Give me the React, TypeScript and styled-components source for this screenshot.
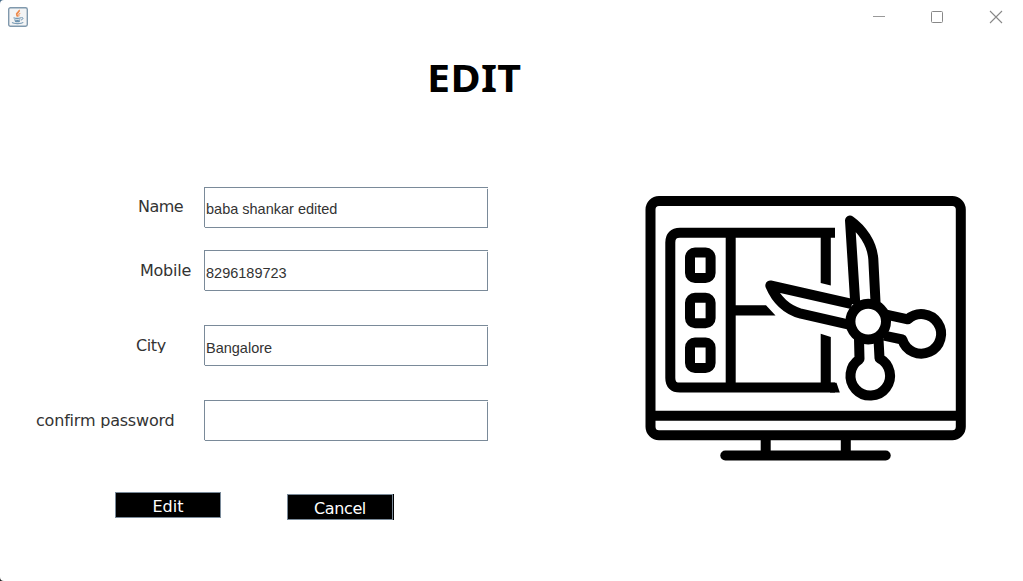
import React from "react";
import styled, { createGlobalStyle } from "styled-components";

const GlobalStyle = createGlobalStyle`
  * { box-sizing: border-box; }
  body { margin: 0; background: linear-gradient(#476b88, #222); }
`;

const Window = styled.div`
  width: 1023px;
  height: 581px;
  display: flex;
  flex-direction: column;
  background: #fff;
  border-radius: 4px 0 0 4px;
  overflow: hidden;
`;

const TitleBar = styled.header`
  height: 34px;
  flex: none;
  display: flex;
  justify-content: space-between;
  align-items: flex-start;
  padding: 7px 20px 0 8px;
`;

const WindowControls = styled.div`
  display: flex;
  gap: 44px;
  padding-top: 3px;
  svg { display: block; }
`;

const Heading = styled.h1`
  margin: 18px 0 0 427px;
  height: 50px;
  width: 120px;
  flex: none;
  font: 700 38px/50px "Noto Sans", sans-serif;
  letter-spacing: 0.3px;
  color: #000;
  transform: scaleX(1.085);
  transform-origin: 0 50%;
`;

const Content = styled.main`
  display: flex;
  align-items: flex-start;
  padding-top: 85px;
`;

const Form = styled.form`
  width: 640px;
  display: flex;
  flex-direction: column;
`;

const FieldRow = styled.div<{ $gap: number }>`
  display: flex;
  height: 41px;
  margin-bottom: ${(p) => p.$gap}px;
`;

const LabelCell = styled.div<{ $indent: number; $top: number }>`
  width: 204px;
  flex: none;
  padding: ${(p) => p.$top}px 0 0 ${(p) => p.$indent}px;
`;

const Label = styled.label<{ $spacing: number; $clip: boolean }>`
  display: block;
  height: ${(p) => (p.$clip ? 18 : 22)}px;
  overflow: ${(p) => (p.$clip ? "hidden" : "visible")};
  white-space: nowrap;
  font: 16px/22px "DejaVu Sans", sans-serif;
  letter-spacing: ${(p) => p.$spacing}px;
  color: #333;
`;

const TextField = styled.div<{ $shift: number }>`
  position: relative;
  width: 284px;
  height: 41px;
  border: 1px solid #7a8a99;
  padding: ${(p) => 2 + p.$shift}px 0 0 1px;
  font: 14.5px/38px "Liberation Sans", Arial, sans-serif;
  line-height: ${(p) => 38 - p.$shift}px;
  padding-top: ${(p) => 2 + p.$shift * 1.5}px;
  color: #333;
  white-space: nowrap;

  &::before, &::after {
    content: "";
    position: absolute;
    width: 1px;
    height: 1px;
    background: #eee;
  }
  &::before { right: -1px; top: 0; }
  &::after { left: -1px; bottom: -1px; }
`;

const Actions = styled.div`
  display: flex;
  align-items: flex-start;
  padding: 51px 0 0 115px;
  gap: 66px;
`;

const Button = styled.button<{ $drop?: number; $spacing?: number }>`
  width: 106px;
  height: 26px;
  margin: ${(p) => p.$drop ?? 0}px 0 0;
  padding: 3px 0 0;
  border: 1px solid #7a8a99;
  border-radius: 0;
  background: #000;
  color: #fff;
  font: 16px/21px "DejaVu Sans", sans-serif;
  letter-spacing: ${(p) => p.$spacing ?? 0}px;
  box-shadow: ${(p) => (p.$drop ? "1px 0 0 #000" : "none")};
`;

const Illustration = styled.svg`
  display: block;
  flex: none;
  margin-top: 3px;
`;

const fields = [
  { label: "Name", value: "baba shankar edited", indent: 138, top: 9, gap: 22, spacing: -0.5, clip: false, shift: 0 },
  { label: "Mobile", value: "8296189723", indent: 140, top: 10, gap: 34, spacing: -0.25, clip: false, shift: 1 },
  { label: "City", value: "Bangalore", indent: 136, top: 10, gap: 34, spacing: -0.4, clip: true, shift: 1 },
  { label: "confirm password", value: "", indent: 36, top: 10, gap: 0, spacing: -0.2, clip: true, shift: 0 },
];

function JavaIcon() {
  return (
    <svg width="20" height="20" viewBox="0 0 20 20" fill="none">
      <rect x="0.7" y="0.7" width="18.6" height="18.6" rx="1.8" fill="#f3f4f5" stroke="#8099ad" strokeWidth="1.4" />
      <path d="M11 3c1.300 2-3.400 2.900-2.200 4.900.3.700.8 1.200.8 1.900" stroke="#ee8a4c" strokeWidth="1.800" />
      <path d="M12.300 6.200c-1.700.7-2 1.500-1.100 3.200" stroke="#f0a070" strokeWidth="1.200" />
      <path d="M5.500 10.700c2 .7 5.500.6 7.500 0M6.200 12.700c2 .8 4.400.8 6.100 0M7 14.200c1.500.6 3.400.6 4.800 0" stroke="#6d93b0" strokeWidth="1.200" />
      <path d="M13.300 10.600c2.600-.5 2 2-.3 2.400" stroke="#6d93b0" />
      <path d="M4 15.500c2 1.500 9.500 1.300 11.300-.1" stroke="#7c9db6" strokeWidth="1.200" />
    </svg>
  );
}

function EditorArt() {
  return (
    <Illustration width="330" height="275" viewBox="640 190 330 275" fill="none" stroke="#000" strokeWidth="10">
      <rect x="650.5" y="201" width="310.300" height="234.200" rx="8.500" />
      <path d="M650 415.700H961M765.700 435V455M845.800 435V455" />
      <path d="M725.300 455.500H885.700" strokeLinecap="round" />
      <path d="M835 232.800H680Q670.300 232.800 670.300 242.500V378Q670.300 387.600 680 387.600H835M730.700 233V388" />
      <path d="M836.500 382.700L839.800 392.500H830V382.700Z" fill="#000" stroke="none" />
      <path d="M820.700 233H830.800V285.500L820.700 283ZM820.700 333.800L830.800 337V388H820.700ZM735 305.300H766L775.500 315.500H735Z" fill="#000" stroke="none" />
      <rect x="690" y="252.500" width="20.600" height="25.500" rx="5" />
      <rect x="690" y="297.700" width="20.600" height="25.500" rx="5" />
      <rect x="690" y="342.500" width="20.600" height="25.500" rx="5" />
      <g strokeLinejoin="round">
        <path d="M855.300 304L850 220.500C862 229 872 243 873.300 259L875.600 304" />
        <path d="M852 304L770.300 285.500C776 299 786 309.500 801 313.700L849 324.700" />
        <circle cx="868.200" cy="321.600" r="17.800" />
        <path d="M885 314.300L907.900 319.300A19.800 19.800 0 1 1 902.300 339.500L884 335.700" />
        <path d="M859 339L859.500 359.200A19.800 19.800 0 1 0 879.500 358.300L878.500 339" />
      </g>
    </Illustration>
  );
}

export default function App() {
  return (
    <>
      <GlobalStyle />
      <Window>
        <TitleBar>
          <JavaIcon />
          <WindowControls>
            <svg width="14" height="14" fill="none" stroke="#999"><path d="M0 6.500H12" /></svg>
            <svg width="14" height="14" fill="none" stroke="#888"><rect x="0.500" y="1.500" width="11" height="11" rx="1" /></svg>
            <svg width="14" height="14" fill="none" stroke="#888" strokeWidth="1.100"><path d="M1 1L13 13M13 1L1 13" /></svg>
          </WindowControls>
        </TitleBar>
        <Heading>EDIT</Heading>
        <Content>
          <Form>
            {fields.map((f) => (
              <FieldRow key={f.label} $gap={f.gap}>
                <LabelCell $indent={f.indent} $top={f.top}>
                  <Label $spacing={f.spacing} $clip={f.clip}>{f.label}</Label>
                </LabelCell>
                <TextField $shift={f.shift}>{f.value}</TextField>
              </FieldRow>
            ))}
            <Actions>
              <Button type="button">Edit</Button>
              <Button type="button" $drop={2} $spacing={-0.4}>Cancel</Button>
            </Actions>
          </Form>
          <EditorArt />
        </Content>
      </Window>
    </>
  );
}
